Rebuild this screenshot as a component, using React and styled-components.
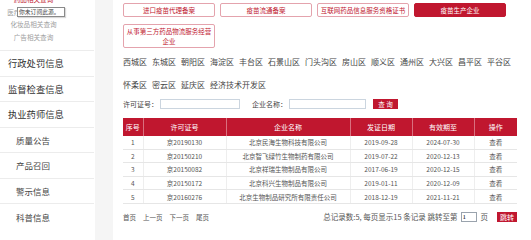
import styled, { createGlobalStyle } from "styled-components";

const GlobalStyle = createGlobalStyle`
  html, body {
    margin: 0;
    padding: 0;
    background: #ffffff;
    overflow: hidden;
  }
  body {
    font-family: "Noto Sans CJK SC", "Noto Sans", sans-serif;
    color: #333333;
  }
`;

const RED = "#c0172f";

const menus = [
  { label: "行政处罚信息", sub: false },
  { label: "监督检查信息", sub: false },
  { label: "执业药师信息", sub: false },
  { label: "质量公告", sub: true },
  { label: "产品召回", sub: true },
  { label: "警示信息", sub: true },
  { label: "科普信息", sub: true, last: true },
];

const tabs = [
  { label: "进口疫苗代理备案" },
  { label: "疫苗流通备案" },
  { label: "互联网药品信息服务资格证书" },
  { label: "疫苗生产企业", active: true },
  { label: "从事第三方药品物流服务经营企业" },
];

const districts = [
  "西城区", "东城区", "朝阳区", "海淀区", "丰台区", "石景山区", "门头沟区",
  "房山区", "顺义区", "通州区", "大兴区", "昌平区", "平谷区",
  "怀柔区", "密云区", "延庆区", "经济技术开发区",
];

const rows = [
  ["1", "京20190130", "北京民海生物科技有限公司", "2019-09-28", "2024-07-30"],
  ["2", "京20150210", "北京智飞绿竹生物制药有限公司", "2019-07-22", "2020-12-13"],
  ["3", "京20150082", "北京祥瑞生物制品有限公司", "2017-06-19", "2020-12-15"],
  ["4", "京20150172", "北京科兴生物制品有限公司", "2019-01-11", "2020-12-09"],
  ["5", "京20160276", "北京生物制品研究所有限责任公司", "2018-12-19", "2021-11-21"],
];

export default function App() {
  return (
    <>
      <GlobalStyle />
      <Page>
        <Sidebar>
          <SubMenu>
            <SubLink $active>药品相关查询</SubLink>
            <SubLink>
              医疗器械相关查询
              <Tooltip>你未订阅此源。</Tooltip>
            </SubLink>
            <SubLink>化妆品相关查询</SubLink>
            <SubLink>广告相关查询</SubLink>
          </SubMenu>
          {menus.map((m) => (
            <MenuItem key={m.label} $sub={m.sub} $last={m.last}>
              {m.label}
            </MenuItem>
          ))}
        </Sidebar>
        <Gutter />
        <Main>
          <Tabs>
            {tabs.map((t) => (
              <Tab key={t.label} $active={t.active}>
                {t.label}
              </Tab>
            ))}
          </Tabs>
          <Districts>
            {districts.map((d) => (
              <District key={d}>{d}</District>
            ))}
          </Districts>
          <SearchRow>
            <Label>许可证号：</Label>
            <Input $w={80} />
            <Label $gap>企业名称：</Label>
            <Input $w={77} />
            <SearchButton>查 询</SearchButton>
          </SearchRow>
          <Table>
            <colgroup>
              <col style={{ width: 20 }} />
              <col style={{ width: 83 }} />
              <col style={{ width: 124 }} />
              <col style={{ width: 62 }} />
              <col style={{ width: 62 }} />
              <col style={{ width: 43 }} />
            </colgroup>
            <thead>
              <tr>
                <Th>序号</Th>
                <Th>许可证号</Th>
                <Th>企业名称</Th>
                <Th>发证日期</Th>
                <Th>有效期至</Th>
                <Th>操作</Th>
              </tr>
            </thead>
            <tbody>
              {rows.map((r) => (
                <tr key={r[0]}>
                  {r.map((c, i) => (
                    <Td key={i}>{c}</Td>
                  ))}
                  <Td>查看</Td>
                </tr>
              ))}
            </tbody>
          </Table>
          <Pager>
            <PagerLinks>
              <span>首页</span>
              <span>上一页</span>
              <span>下一页</span>
              <span>尾页</span>
            </PagerLinks>
            <PagerInfo>
              总记录数:5, 每页显示15 条记录 跳转至第
              <PageInput defaultValue="1" />
              页
              <JumpButton>跳转</JumpButton>
            </PagerInfo>
          </Pager>
        </Main>
      </Page>
    </>
  );
}

/* layout */
const Page = styled.div`
  display: flex;
  width: 531px;
  height: 240px;
  overflow: hidden;
`;

const Sidebar = styled.div`
  width: 94px;
  flex-shrink: 0;
  display: flex;
  flex-direction: column;
`;

const SubMenu = styled.div`
  margin-top: -7px;
  padding-bottom: 7px;
  display: flex;
  flex-direction: column;
  border-bottom: 1px solid #ececec;
`;

const SubLink = styled.div`
  position: relative;
  width: 67px;
  text-align: center;
  font-size: 6.6px;
  line-height: 12.5px;
  white-space: nowrap;
  color: ${(p) => (p.$active ? RED : "#a0a0a0")};
`;

const Tooltip = styled.div`
  position: absolute;
  left: 17px;
  top: 1.5px;
  width: 44px;
  height: 8px;
  line-height: 8px;
  padding: 0 1px;
  font-size: 5.8px;
  color: #444;
  background: #fff;
  border: 1px solid #8a8a8a;
  box-shadow: 1px 1px 1px rgba(0, 0, 0, 0.15);
  text-align: left;
`;

const MenuItem = styled.div`
  height: 25.5px;
  box-sizing: border-box;
  display: flex;
  align-items: center;
  padding-left: ${(p) => (p.$sub ? "16px" : "8px")};
  font-size: ${(p) => (p.$sub ? "8.5px" : "9.3px")};
  color: ${(p) => (p.$sub ? "#444" : "#333")};
  border-bottom: ${(p) => (p.$last ? "none" : "1px solid #ececec")};
`;

const Gutter = styled.div`
  width: 18px;
  margin-left: 1px;
  flex-shrink: 0;
  background: #f5f5f5;
`;

const Main = styled.div`
  flex: 1;
  padding: 3px 0 0 10px;
  display: flex;
  flex-direction: column;
`;

const Tabs = styled.div`
  display: grid;
  grid-template-columns: repeat(4, 92px);
  column-gap: 5px;
  row-gap: 7px;
`;

const Tab = styled.div`
  box-sizing: border-box;
  min-height: 14px;
  padding: 1px 0;
  display: flex;
  align-items: center;
  justify-content: center;
  text-align: center;
  font-size: 6.5px;
  line-height: 10px;
  border: 1px solid ${(p) => (p.$active ? RED : "#e4a3ad")};
  border-radius: 2px;
  background: ${(p) => (p.$active ? RED : "#ffffff")};
  color: ${(p) => (p.$active ? "#ffffff" : RED)};
`;

const Districts = styled.div`
  margin-top: 3px;
  width: 390px;
  display: flex;
  flex-wrap: wrap;
  column-gap: 5px;
  line-height: 22.5px;
`;

const District = styled.span`
  font-size: 8px;
  color: #444;
  white-space: nowrap;
`;

const SearchRow = styled.div`
  margin-top: 2px;
  display: flex;
  align-items: center;
  height: 12px;
`;

const Label = styled.span`
  font-size: 7px;
  color: #444;
  margin-left: ${(p) => (p.$gap ? "12px" : "0")};
  margin-right: 2px;
  white-space: nowrap;
`;

const Input = styled.input`
  box-sizing: border-box;
  width: ${(p) => p.$w}px;
  height: 10px;
  padding: 0;
  border: 1px solid #cbd5df;
  outline: none;
`;

const SearchButton = styled.button`
  margin-left: 7px;
  width: 25px;
  height: 10px;
  padding: 0;
  border: none;
  background: ${RED};
  color: #fff;
  font-family: inherit;
  font-size: 6.5px;
  line-height: 10px;
`;

const Table = styled.table`
  margin-top: 8px;
  width: 394px;
  border-collapse: collapse;
  table-layout: fixed;
`;

const Th = styled.th`
  height: 18px;
  padding: 0;
  background: ${RED};
  color: #fff;
  font-weight: normal;
  font-size: 7px;
  border-left: 1px solid #d9707f;
  &:first-child {
    border-left: none;
  }
`;

const Td = styled.td`
  height: 12.6px;
  padding: 0;
  text-align: center;
  font-size: 6.5px;
  line-height: 8px;
  color: #555;
  white-space: nowrap;
  border-bottom: 1px solid #e6e6e6;
  border-left: 1px solid #eeeeee;
  &:first-child {
    border-left: none;
  }
`;

const Pager = styled.div`
  margin-top: 7px;
  width: 394px;
  display: flex;
  align-items: center;
  justify-content: space-between;
  height: 12px;
`;

const PagerLinks = styled.div`
  display: flex;
  gap: 7px;
  font-size: 6.5px;
  color: #555;
`;

const PagerInfo = styled.div`
  display: flex;
  align-items: center;
  font-size: 7.5px;
  color: #555;
  white-space: nowrap;
`;

const PageInput = styled.input`
  box-sizing: border-box;
  width: 16px;
  height: 10px;
  margin: 0 4px 0 3px;
  padding: 0 1px;
  font-size: 7px;
  font-family: "Liberation Serif", serif;
  border: 1px solid #9aa3ad;
  outline: none;
`;

const JumpButton = styled.button`
  margin-left: 9px;
  width: 20px;
  height: 10px;
  padding: 0;
  border: none;
  background: ${RED};
  color: #fff;
  font-family: inherit;
  font-size: 7px;
  line-height: 10px;
`;
